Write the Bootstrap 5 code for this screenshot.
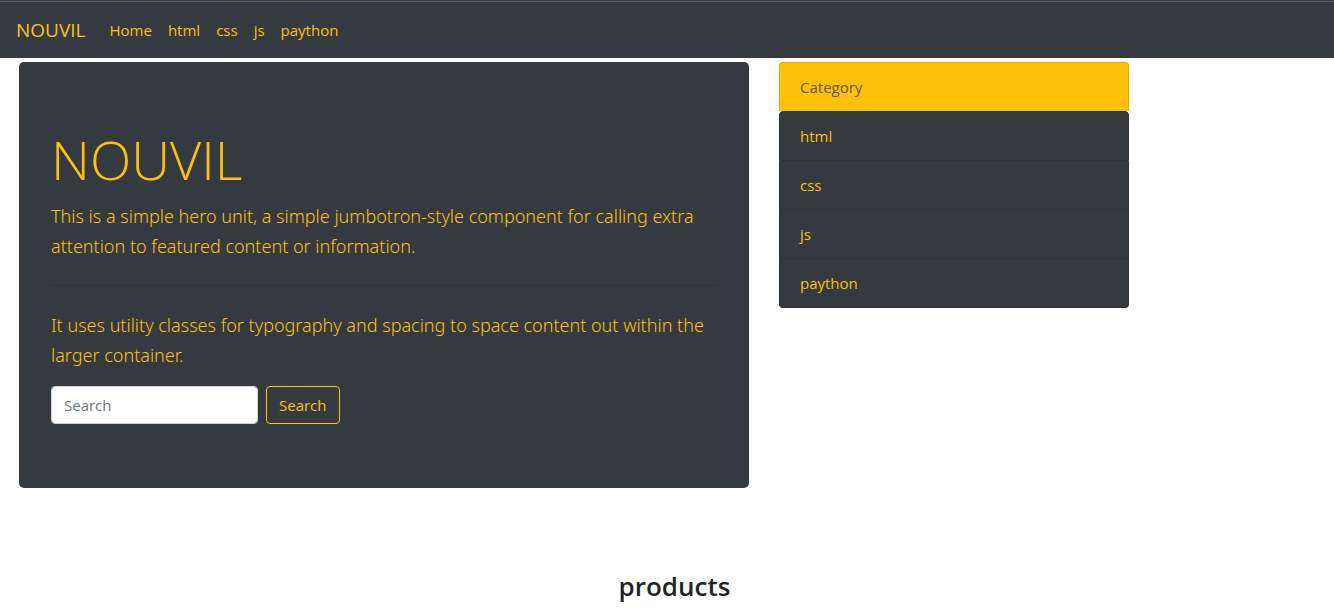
<!DOCTYPE html>
<html lang="en">
<head>
<meta charset="utf-8">
<meta name="viewport" content="width=device-width, initial-scale=1">
<title>NOUVIL</title>
<link href="https://cdn.jsdelivr.net/npm/bootstrap@5.3.0/dist/css/bootstrap.min.css" rel="stylesheet">
<style>
  :root { --ink: #343a40; --gold: #ffc107; }
  body { font-family: "Open Sans", "Noto Sans", sans-serif; font-size: 15px; line-height: 24px; color: #212529; }
  .top-edge { height: 2px; background: var(--ink); border-bottom: 1px solid #606266; }
  .site-nav { background: var(--ink); min-height: 56px; }
  .site-nav .navbar-brand { font-size: 19px; line-height: 30px; padding: 4px 0; }
  .site-nav a, .site-nav a:hover { color: var(--gold); }
  .site-main { max-width: 1140px; --bs-gutter-x: 30px; }
  .hero { background: var(--ink); color: var(--gold); padding: 64px 32px; border-radius: 5px; }
  .hero h1 { font-size: 54px; line-height: 67px; font-weight: 300; }
  .hero p { font-family: "Noto Sans", "Open Sans", sans-serif; font-size: 18px; line-height: 30px; font-weight: 300; }
  .hero hr { color: #000; opacity: .1; }
  .hero .form-control { width: 207px; font-size: 15px; line-height: 24px; border-color: #ced4da; border-radius: 4px; }
  .hero .form-control::placeholder { color: #6c757d; }
  .hero .btn { font-size: 15px; line-height: 24px; border-radius: 4px; }
  .category-title { background: var(--gold); color: #5b5a4c; border: 1px solid #dfaa0a; border-bottom: 0; border-radius: 4px 4px 0 0; padding: 12px 20px; }
  .category-list { --bs-list-group-bg: var(--ink); --bs-list-group-color: var(--gold); --bs-list-group-action-color: var(--gold); --bs-list-group-border-color: #2e3439; --bs-list-group-border-radius: 4px; --bs-list-group-item-padding-x: 20px; --bs-list-group-item-padding-y: 12px; }
  .products { margin-top: 81px; padding-left: 15px; }
  .products h2 { font-size: 26px; line-height: 34px; font-weight: 600; }
</style>
</head>
<body>
<header>
  <div class="top-edge"></div>
  <nav class="navbar navbar-expand site-nav px-3 py-2">
    <a class="navbar-brand me-3" href="#">NOUVIL</a>
    <ul class="navbar-nav">
      <li class="nav-item"><a class="nav-link" href="#">Home</a></li>
      <li class="nav-item"><a class="nav-link" href="#">html</a></li>
      <li class="nav-item"><a class="nav-link" href="#">css</a></li>
      <li class="nav-item"><a class="nav-link" href="#">js</a></li>
      <li class="nav-item"><a class="nav-link" href="#">paython</a></li>
    </ul>
  </nav>
</header>
<main>
  <div class="row site-main ms-1 me-0 mt-1">
    <section class="col-md-8">
      <div class="hero">
        <h1 class="mb-2">NOUVIL</h1>
        <p class="mb-3">This is a simple hero unit, a simple jumbotron-style component for calling extra attention to featured content or information.</p>
        <hr class="my-4">
        <p class="mb-3">It uses utility classes for typography and spacing to space content out within the larger container.</p>
        <form class="d-flex gap-2">
          <input class="form-control" type="search" placeholder="Search" aria-label="Search">
          <button class="btn btn-outline-warning" type="submit">Search</button>
        </form>
      </div>
    </section>
    <aside class="col-md-4">
      <div class="category-title">Category</div>
      <div class="list-group category-list">
        <a class="list-group-item list-group-item-action" href="#">html</a>
        <a class="list-group-item list-group-item-action" href="#">css</a>
        <a class="list-group-item list-group-item-action" href="#">js</a>
        <a class="list-group-item list-group-item-action" href="#">paython</a>
      </div>
    </aside>
  </div>
  <section class="products text-center">
    <h2 class="mb-0">products</h2>
  </section>
</main>
<script src="https://cdn.jsdelivr.net/npm/bootstrap@5.3.0/dist/js/bootstrap.bundle.min.js"></script>
</body>
</html>
